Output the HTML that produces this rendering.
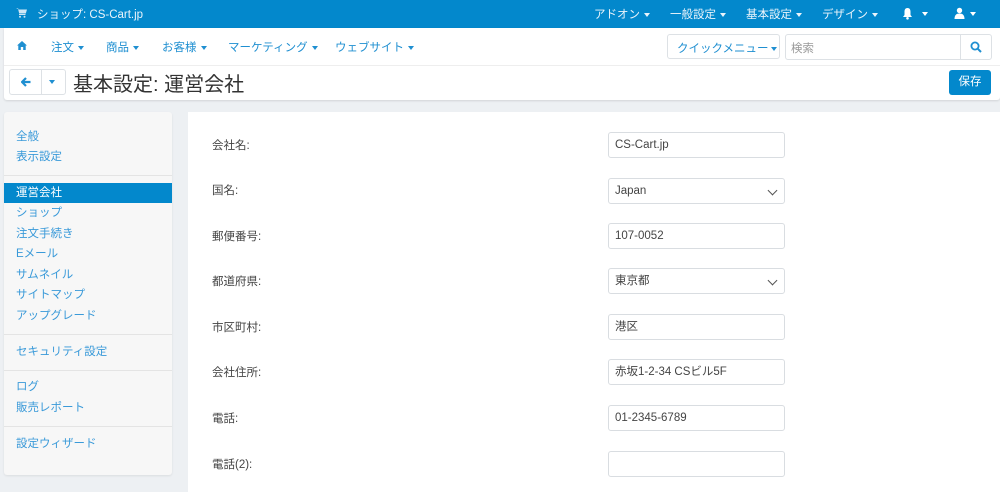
<!DOCTYPE html>
<html><head><meta charset="utf-8"><style>
*{box-sizing:border-box;margin:0;padding:0}
body{width:1000px;height:487px;overflow:hidden;background:#edf0f3;font-family:"Liberation Sans","Noto Sans CJK JP",sans-serif;font-size:11.5px;position:relative}
.abs{position:absolute;white-space:nowrap}
.top{left:0;top:0;width:1000px;height:28px;background:#0388cc;color:#fff}
.top span{position:absolute;top:6px;font-size:11.5px;color:#eaf4fb}
.car{display:inline-block;width:0;height:0;border-left:3.5px solid transparent;border-right:3.5px solid transparent;border-top:4px solid currentColor;vertical-align:middle;margin-left:4px}
.hdr{left:4px;top:28px;width:996px;height:72px;background:#fff;border-radius:0 0 3px 3px;box-shadow:0 1px 2px rgba(0,0,0,.12)}
.nav span{position:absolute;top:11px;color:#1f8fd1;font-size:11.5px;white-space:nowrap}
.side{left:4px;top:112px;width:168px;height:363px;background:#f7f7f7;border-radius:3px;box-shadow:0 1px 2px rgba(0,0,0,.08)}
.side div{position:absolute;left:12px;color:#3a9ad9;font-size:11.5px;line-height:20px}
.side hr{position:absolute;left:0;width:168px;border:0;border-top:1px solid #e4e4e4}
.main{left:188px;top:112px;width:812px;height:380px;background:#fff}
.lbl{position:absolute;left:24px;color:#444;font-size:11.5px}
.in{position:absolute;left:420px;width:177px;height:26px;border:1px solid #d9dde1;border-radius:3px;padding-left:6px;line-height:24px;color:#444;font-size:11.5px}
.chev{position:absolute;right:8px;top:8px;width:7px;height:7px;border-right:1.6px solid #555;border-bottom:1.6px solid #555;transform:rotate(45deg)}
</style></head><body>
<div class="abs top">
<svg class="abs" style="left:16px;top:8px" width="11" height="10" viewBox="0 0 11 10"><path d="M0 0h2l.5 1.5H11l-1.2 4H3.2L2 .8z M3 6h6.5v1H3z" fill="#cfe6f5"/><circle cx="4" cy="8.7" r="1" fill="#cfe6f5"/><circle cx="8.5" cy="8.7" r="1" fill="#cfe6f5"/></svg>
<span style="left:37px">ショップ: CS-Cart.jp</span>
<span style="left:594px">アドオン<i class="car"></i></span>
<span style="left:670px">一般設定<i class="car"></i></span>
<span style="left:746px">基本設定<i class="car"></i></span>
<span style="left:822px">デザイン<i class="car"></i></span>
<svg class="abs" style="left:902px;top:7px" width="11" height="13" viewBox="0 0 11 13"><path d="M5.5 1C3 1 2.5 3 2.5 5v3L1 10h9L8.5 8V5C8.5 3 8 1 5.5 1z" fill="#fff"/><circle cx="5.5" cy="11.3" r="1.3" fill="#fff"/></svg>
<i class="car abs" style="left:918px;top:12px;color:#fff"></i>
<svg class="abs" style="left:954px;top:7px" width="11" height="12" viewBox="0 0 11 12"><circle cx="5.5" cy="3.5" r="2.7" fill="#fff"/><path d="M0.5 12c0-4 2-5.5 5-5.5s5 1.5 5 5.5z" fill="#fff"/></svg>
<i class="car abs" style="left:966px;top:12px;color:#fff"></i>
</div>
<div class="abs hdr">
<div class="nav">
<svg class="abs" style="left:13px;top:13px" width="10" height="9" viewBox="0 0 10 9"><path d="M5 0L0 4.5h1.3V9h2.5V6h2.4v3h2.5V4.5H10z" fill="#1f8fd1"/></svg>
<span style="left:47px">注文<i class="car"></i></span>
<span style="left:102px">商品<i class="car"></i></span>
<span style="left:158px">お客様<i class="car"></i></span>
<span style="left:224px">マーケティング<i class="car"></i></span>
<span style="left:331px">ウェブサイト<i class="car"></i></span>
</div>
<div class="abs" style="left:663px;top:6px;width:113px;height:25px;border:1px solid #dde1e5;border-radius:3px;color:#1f8fd1;padding:5px 0 0 9px;font-size:11.5px">クイックメニュー<i class="car" style="margin-left:2px"></i></div>
<div class="abs" style="left:781px;top:6px;width:207px;height:26px;border:1px solid #dde1e5;border-radius:3px;color:#999;padding:5px 0 0 5px">検索
<div class="abs" style="left:174px;top:0;width:31px;height:24px;border-left:1px solid #dde1e5"></div>
<svg class="abs" style="left:184px;top:6px" width="12" height="12" viewBox="0 0 12 12"><circle cx="5" cy="5" r="3.6" stroke="#1f8fd1" stroke-width="1.8" fill="none"/><path d="M7.6 7.6L11 11" stroke="#1f8fd1" stroke-width="2"/></svg></div>
<div class="abs" style="left:0;top:37px;width:996px;border-top:1px solid #eee"></div>
<div class="abs" style="left:5px;top:41px;width:57px;height:26px;border:1px solid #dde1e5;border-radius:3px">
<div class="abs" style="left:31px;top:0;height:24px;border-left:1px solid #dde1e5"></div>
<svg class="abs" style="left:11px;top:7px" width="10" height="10" viewBox="0 0 10 10"><path d="M5 1L1 5l4 4M1.5 5H9.5" stroke="#1f8fd1" stroke-width="2.2" fill="none"/></svg>
<i class="car abs" style="left:39px;top:10px;color:#1f8fd1;margin:0"></i></div>
<div class="abs" style="left:69px;top:40px;font-size:20px;color:#333">基本設定: 運営会社</div>
<div class="abs" style="left:945px;top:42px;width:42px;height:25px;background:#0388cc;border-radius:3px;color:#fff;text-align:center;line-height:25px">保存</div>
</div>
<div class="abs side">
<div style="top:15px">全般</div><div style="top:35px">表示設定</div>
<hr style="top:63px">
<div style="top:71px;left:0;width:168px;padding-left:12px;background:#0388cc;color:#fff">運営会社</div>
<div style="top:91px">ショップ</div><div style="top:112px">注文手続き</div><div style="top:132px">Eメール</div><div style="top:153px">サムネイル</div><div style="top:173px">サイトマップ</div><div style="top:194px">アップグレード</div>
<hr style="top:222px"><div style="top:230px">セキュリティ設定</div>
<hr style="top:258px"><div style="top:265px">ログ</div><div style="top:286px">販売レポート</div>
<hr style="top:314px"><div style="top:322px">設定ウィザード</div>
</div>
<div class="abs main">
<div class="lbl" style="top:25px">会社名:</div><div class="in" style="top:20px">CS-Cart.jp</div>
<div class="lbl" style="top:70px">国名:</div><div class="in" style="top:66px">Japan<i class="chev"></i></div>
<div class="lbl" style="top:116px">郵便番号:</div><div class="in" style="top:111px">107-0052</div>
<div class="lbl" style="top:161px">都道府県:</div><div class="in" style="top:156px">東京都<i class="chev"></i></div>
<div class="lbl" style="top:207px">市区町村:</div><div class="in" style="top:202px">港区</div>
<div class="lbl" style="top:252px">会社住所:</div><div class="in" style="top:247px">赤坂1-2-34 CSビル5F</div>
<div class="lbl" style="top:298px">電話:</div><div class="in" style="top:293px">01-2345-6789</div>
<div class="lbl" style="top:344px">電話(2):</div><div class="in" style="top:339px"></div>
</div>
</body></html>
